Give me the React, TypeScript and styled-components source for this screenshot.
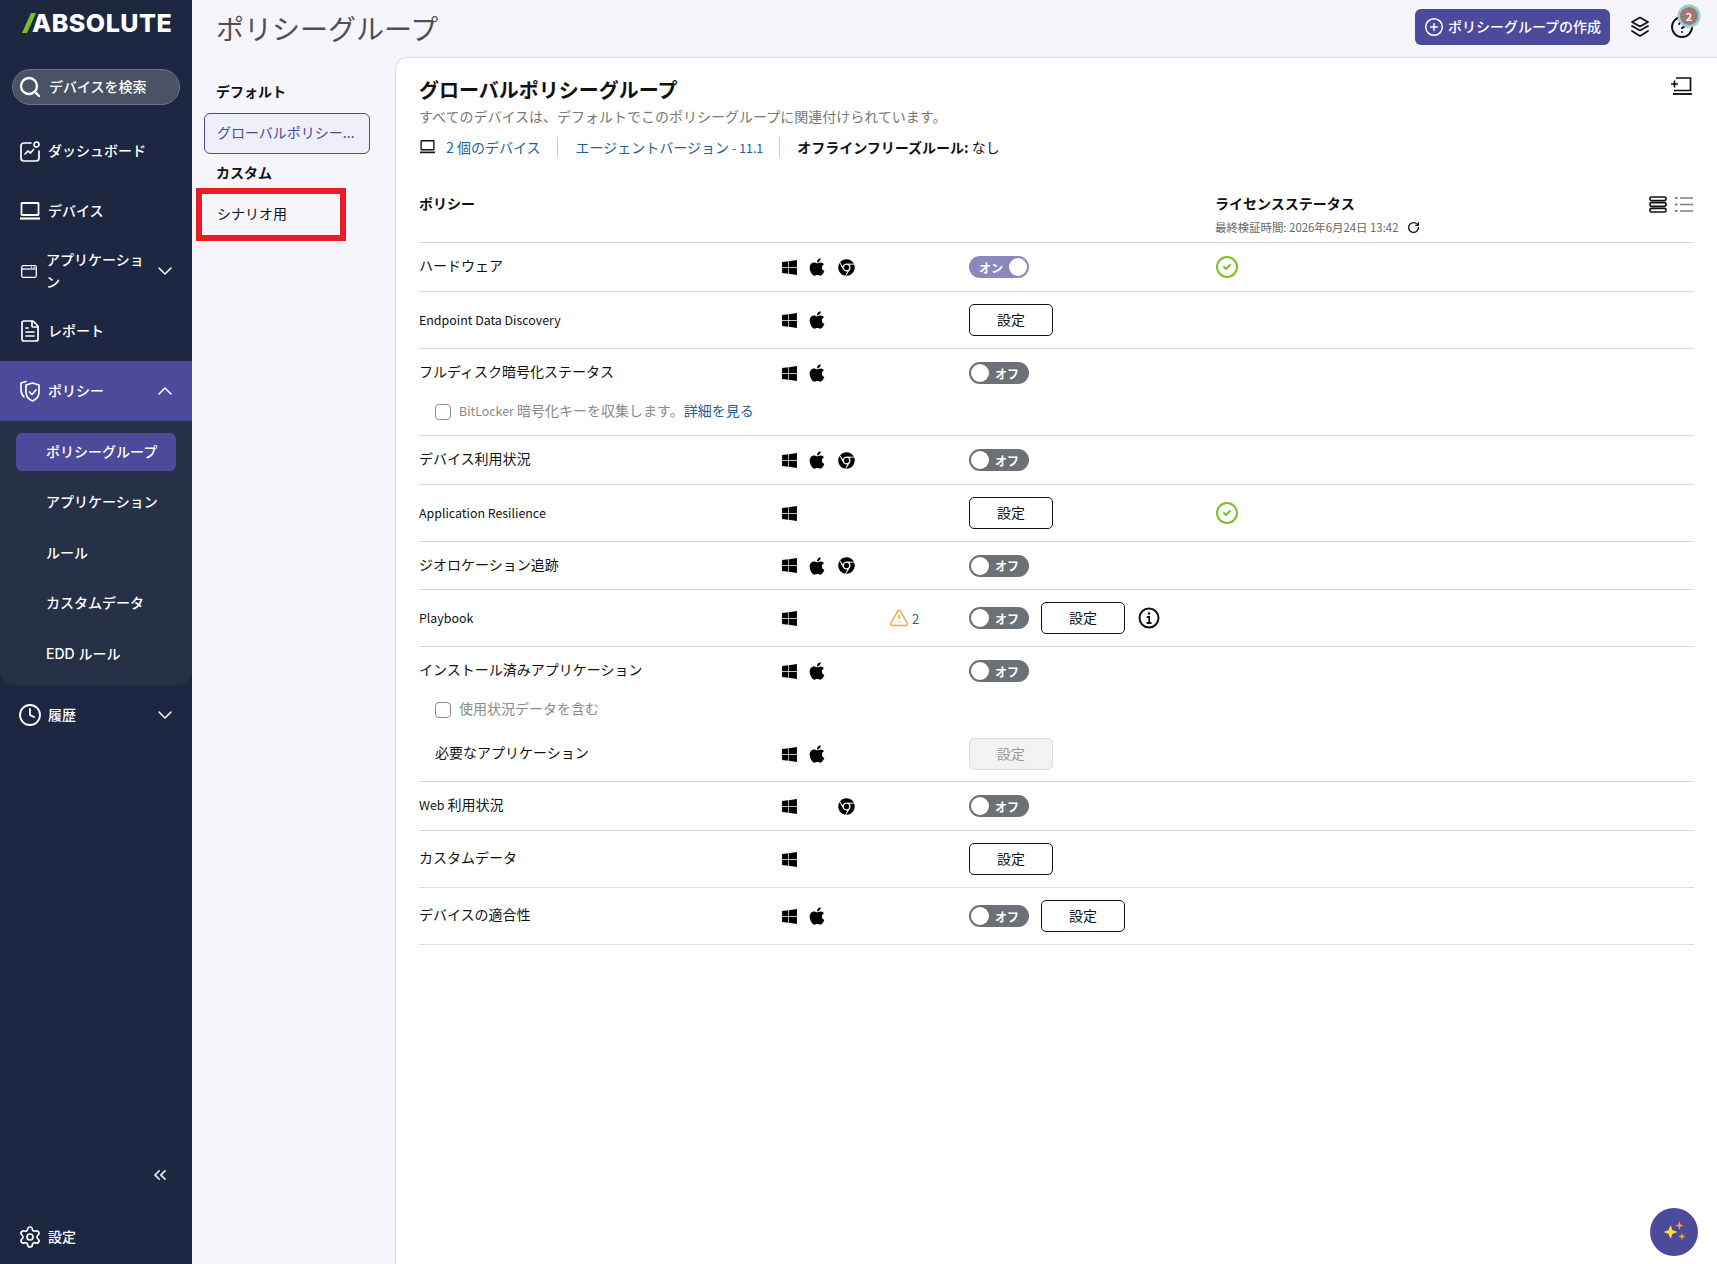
import React from 'react';
import styled, { createGlobalStyle } from 'styled-components';
import {
  ChevronDown,
  ChevronUp,
  ChevronsLeft,
  CircleCheck,
  CircleHelp,
  CirclePlus,
  Clock,
  FileText,
  RotateCw,
  Search,
  Settings,
  TriangleAlert,
} from 'lucide-react';
import { FaApple, FaChrome, FaWindows } from 'react-icons/fa';

const GlobalStyle = createGlobalStyle`
  html, body {
    margin: 0;
    padding: 0;
    height: 100%;
    background: #f5f5fb;
    font-family: "Noto Sans CJK JP", "Noto Sans", sans-serif;
    color: #111;
  }
  * { box-sizing: border-box; }
`;

const Page = styled.div`
  display: flex;
  width: 1717px;
  height: 1264px;
  overflow: hidden;
  position: relative;
`;

/* ---------- sidebar ---------- */

const Sidebar = styled.aside`
  width: 192px;
  flex: none;
  display: flex;
  flex-direction: column;
  background: #1d2742;
  color: #fff;
  font-family: Inter, "Noto Sans CJK JP", sans-serif;
`;

const Logo = styled.div`
  height: 69px;
  padding: 6px 0 0 22px;
  display: flex;
  align-items: flex-start;
  font-size: 25px;
  line-height: 34px;
  font-weight: 800;
  letter-spacing: 0.5px;

  svg {
    margin: 7px -4px 0 0;
  }
`;

const SearchBox = styled.div`
  width: 168px;
  height: 36px;
  margin-left: 12px;
  padding: 0 0 2px 5px;
  display: flex;
  align-items: center;
  gap: 7px;
  background: #4a5266;
  border: 1px solid #6b7283;
  border-radius: 18px;
  font-size: 14px;
  font-weight: 500;

  svg {
    margin-top: 2px;
  }
`;

const SearchGap = styled.div`
  height: 16px;
  flex: none;
`;

const NavItem = styled.div<{ $active?: boolean }>`
  height: 60px;
  flex: none;
  display: flex;
  align-items: center;
  gap: 8px;
  padding: 0 15px 0 20px;
  font-size: 14px;
  font-weight: 500;
  line-height: 22px;
  background: ${(p) => (p.$active ? '#4c4a9a' : 'transparent')};
`;

const NavIcon = styled.span<{ $w?: number }>`
  width: ${(p) => p.$w ?? 20}px;
  height: 24px;
  flex: none;
  display: flex;
  align-items: center;
  justify-content: center;

  svg {
    flex: none;
  }
`;

const NavLabel = styled.span`
  flex: 1;
`;

const SubPanel = styled.div`
  height: 264px;
  flex: none;
  display: flex;
  flex-direction: column;
  gap: 12.5px;
  padding: 12px 16px;
  background: #263046;
  border-radius: 0 0 14px 14px;
`;

const SubItem = styled.div<{ $active?: boolean }>`
  height: 38px;
  flex: none;
  display: flex;
  align-items: center;
  padding: 0 0 3px 30px;
  font-size: 14px;
  font-weight: 500;
  white-space: nowrap;
  border-radius: 6px;
  background: ${(p) => (p.$active ? '#4c4a9a' : 'transparent')};
`;

const CollapseRow = styled.div`
  margin-top: auto;
  height: 24px;
  padding-right: 22px;
  display: flex;
  justify-content: flex-end;
  align-items: center;
  color: #d5d8e0;
`;

const SettingsRow = styled(NavItem)`
  margin-top: 28px;
  height: 44px;
  margin-bottom: 5px;
`;

/* ---------- main ---------- */

const Main = styled.div`
  flex: 1;
  display: flex;
  flex-direction: column;
  min-width: 0;
`;

const TopBar = styled.header`
  height: 57px;
  flex: none;
  display: flex;
  align-items: flex-start;
  padding: 9px 23px 0 24px;
`;

const PageTitle = styled.h1`
  margin: -1px auto 0 0;
  font-size: 28px;
  line-height: 40px;
  font-weight: 400;
  color: #4d5157;
`;

const CreateButton = styled.button`
  height: 36px;
  width: 195px;
  display: flex;
  align-items: center;
  justify-content: center;
  gap: 4px;
  padding: 0 0 2px;
  border: none;
  border-radius: 6px;
  background: #4c4a9a;
  color: #fff;
  font: 500 14px "Noto Sans CJK JP", sans-serif;
  white-space: nowrap;

  svg {
    margin-top: 2px;
  }
`;

const TopIcons = styled.div`
  display: flex;
  align-items: center;
  height: 36px;
  margin-left: 20px;
  gap: 20px;
`;

const HelpWrap = styled.div`
  position: relative;
  width: 24px;
  height: 24px;
`;

const HelpBadge = styled.span`
  position: absolute;
  top: -8px;
  left: 10px;
  width: 18px;
  height: 18px;
  display: flex;
  align-items: center;
  justify-content: center;
  border-radius: 50%;
  background: #a47571;
  box-shadow: 0 0 0 2.5px #8fd0d0;
  color: #fff;
  font-size: 11px;
  font-weight: 700;
`;

const Body = styled.div`
  flex: 1;
  display: flex;
  min-height: 0;
`;

const GroupColumn = styled.nav`
  width: 203px;
  flex: none;
  padding: 23px 25px 0 12px;
`;

const GroupHeading = styled.div`
  padding-left: 12px;
  font-size: 14px;
  line-height: 22px;
  font-weight: 700;
  color: #111;
`;

const GroupCard = styled.div<{ $selected?: boolean }>`
  position: relative;
  height: 41px;
  margin: ${(p) => (p.$selected ? '11px 0 7px' : '9px 0 0')};
  display: flex;
  align-items: center;
  padding: ${(p) => (p.$selected ? '0 0 3px 12px' : '0 0 0 12px')};
  font-size: 14px;
  white-space: nowrap;
  border-radius: 6px;
  border: 1px solid ${(p) => (p.$selected ? '#4c4a9a' : 'transparent')};
  background: ${(p) => (p.$selected ? '#eeeff8' : 'transparent')};
  color: ${(p) => (p.$selected ? '#4c4a9a' : '#111')};
`;

const Callout = styled.span`
  position: absolute;
  left: -9px;
  top: -5px;
  width: 150px;
  height: 53px;
  border: 6px solid #ec1c24;
  pointer-events: none;
`;

const Panel = styled.main`
  flex: 1;
  min-width: 0;
  padding: 18px 23px 0 23px;
  background: #fff;
  border-top: 1px solid #dcdde2;
  border-left: 1px solid #dcdde2;
  border-top-left-radius: 12px;
`;

const TitleRow = styled.div`
  display: flex;
  justify-content: space-between;
  align-items: flex-start;

  svg {
    margin: 1px 2px 0 0;
  }
`;

const PanelTitle = styled.h2`
  margin: 0;
  font-size: 20px;
  line-height: 28px;
  font-weight: 700;
`;

const Subtitle = styled.p`
  margin: 2px 0 0;
  font-size: 14px;
  line-height: 20px;
  color: #777;
`;

const MetaRow = styled.div`
  display: flex;
  align-items: center;
  margin-top: 11px;
  height: 20px;
  font-size: 14px;
`;

const MetaItem = styled.div<{ $first?: boolean }>`
  display: flex;
  align-items: center;
  gap: 11px;
  padding: ${(p) => (p.$first ? '0 16px 0 1px' : '0 16px 0 18px')};
  border-left: ${(p) => (p.$first ? 'none' : '1px solid #ccc')};
  color: #1f5f99;
  white-space: nowrap;

  svg {
    color: #111;
  }
`;

const FreezeRule = styled(MetaItem)`
  color: #111;
  padding-left: 17px;

  b {
    font-weight: 700;
  }
`;

const Latin = styled.span`
  font-size: 12.4px;
`;

const TableHead = styled.div`
  display: flex;
  align-items: flex-start;
  height: 50px;
  margin-top: 35px;
  padding-top: 1px;
`;

const HeadPolicy = styled.div`
  width: 796px;
  font-size: 14px;
  line-height: 20px;
  font-weight: 700;
`;

const HeadLicense = styled.div`
  font-size: 14px;
  line-height: 20px;
  font-weight: 700;
`;

const VerifiedAt = styled.div`
  display: flex;
  align-items: center;
  gap: 8px;
  margin-top: 4px;
  font-size: 11.4px;
  line-height: 20px;
  font-weight: 400;
  color: #666;
`;

const ViewSwitch = styled.div`
  margin-left: auto;
  display: flex;
  gap: 8px;
  padding: 3px 1px 0 0;
`;

const Section = styled.section`
  border-top: 1px solid #dcdcdc;
`;

const Row = styled.div<{ $h: number }>`
  display: grid;
  grid-template-columns: 363px 109px 78px 246px 1fr;
  align-items: center;
  min-height: ${(p) => p.$h}px;
`;

const PolicyName = styled.div<{ $indent?: boolean; $latin?: boolean }>`
  font-size: ${(p) => (p.$latin ? '12.4px' : '14px')};
  line-height: 20px;
  margin-bottom: ${(p) => (p.$latin ? '1px' : '4px')};
  padding-left: ${(p) => (p.$indent ? '16px' : '0')};
`;

const OsIcons = styled.div`
  display: flex;
  align-items: center;
  margin-left: -1px;
`;

const OsCell = styled.span<{ $shift?: number }>`
  width: ${(p) => (p.$shift === undefined ? 29 : 28)}px;
  height: 20px;
  display: flex;
  align-items: center;

  svg {
    margin-left: ${(p) => p.$shift ?? 0}px;
  }
`;

const Warn = styled.div`
  display: flex;
  align-items: center;
  gap: 3px;
  margin-left: -2px;
  font-size: 13px;
  color: #1f5f99;
`;

const Controls = styled.div`
  display: flex;
  align-items: center;
  gap: 12px;
`;

const ToggleTrack = styled.div<{ $on?: boolean }>`
  position: relative;
  width: 60px;
  height: 22px;
  flex: none;
  display: flex;
  align-items: center;
  justify-content: ${(p) => (p.$on ? 'flex-start' : 'flex-end')};
  padding: 0 10px;
  border-radius: 11px;
  background: ${(p) => (p.$on ? '#8b88bd' : '#6c7178')};
  color: #fff;
  font-size: 12px;
  font-weight: 700;
`;

const ToggleKnob = styled.span<{ $on?: boolean }>`
  position: absolute;
  top: 2px;
  left: ${(p) => (p.$on ? '40px' : '2px')};
  width: 18px;
  height: 18px;
  border-radius: 50%;
  background: #fff;
`;

const SetupButton = styled.button`
  width: 84px;
  height: 32px;
  flex: none;
  padding: 0 0 3px;
  border: 1px solid #111;
  border-radius: 5px;
  background: #fff;
  color: #111;
  font: 400 14px "Noto Sans CJK JP", sans-serif;

  &:disabled {
    border-color: #dcdcdc;
    background: #f2f2f2;
    color: #999;
  }
`;

const CheckRow = styled.label`
  height: 32px;
  display: flex;
  align-items: center;
  gap: 8px;
  padding: 0 0 6px 16px;
  font-size: 14px;
  color: #8a8a8a;
`;

const CheckBox = styled.span`
  width: 16px;
  height: 16px;
  margin-top: 4px;
  border: 1px solid #8d8d8d;
  border-radius: 4px;
  background: #fff;
`;

const DetailLink = styled.a`
  color: #1f5f99;
  text-decoration: none;
`;

const BitLockerSpace = styled.div`
  height: 6px;
`;

const TableEnd = styled.div`
  border-top: 1px solid #dcdcdc;
`;

const AiButton = styled.button`
  position: absolute;
  left: 1650px;
  top: 1208px;
  width: 48px;
  height: 48px;
  padding: 0;
  display: flex;
  align-items: center;
  justify-content: center;
  border: none;
  border-radius: 50%;
  background: #4c4a9a;
`;

/* ---------- drawn icons ---------- */

const LogoSlash = () => (
  <svg width="14" height="20" viewBox="0 0 14 20">
    <path d="M9 0H14L5 20H0z" fill="#7ac022" />
  </svg>
);

const DashboardIcon = () => (
  <svg width="21" height="21" viewBox="0 0 21 21" fill="none" stroke="#fff" strokeWidth="1.7" strokeLinecap="round" strokeLinejoin="round">
    <path d="M11 2H4a3 3 0 0 0-3 3v12a3 3 0 0 0 3 3h12a3 3 0 0 0 3-3v-7" />
    <circle cx="16.500" cy="3.500" r="2.500" />
    <path d="M5 13l3-3 2.500 2 3-3.500" />
  </svg>
);

const AppWindowIcon = () => (
  <svg width="16" height="13" viewBox="0 0 16 13" fill="none" stroke="#fff" strokeWidth="1.3">
    <rect x="0.700" y="0.700" width="14.600" height="11.600" rx="1.500" />
    <path d="M0.700 4h14.600" />
    <path d="M10 2.300h1M12.500 2.300h1" />
  </svg>
);

const ShieldIcon = () => (
  <svg width="21" height="22" viewBox="0 0 21 22" fill="none" stroke="#fff" strokeWidth="1.7" strokeLinecap="round" strokeLinejoin="round">
    <path d="M6 1.500L1 3v7c0 3 1 5 3 7" />
    <path d="M12.500 3L6 5v7c0 4.500 3 7.500 6.500 9 3.500-1.500 6.500-4.500 6.500-9V5z" />
    <path d="M9.500 12l2.500 2.500 4-4.500" />
  </svg>
);

const LaptopIcon = ({ size, color }: { size: number; color: string }) => (
  <svg width={size} height={size * 0.9} viewBox="0 0 20 18" fill="none" stroke={color} strokeWidth="1.800">
    <rect x="1.500" y="1" width="17" height="12" rx="0.500" />
    <path d="M0 16.500h20" strokeWidth="2.200" />
  </svg>
);

const LayersIcon = () => (
  <svg width="20" height="22" viewBox="0 0 20 22" fill="none" stroke="#111" strokeWidth="1.800" strokeLinejoin="round" strokeLinecap="round">
    <path d="M10 1.500L18 6l-8 4.500L2 6z" />
    <path d="M2 10l8 4.500 8-4.500" />
    <path d="M2 15l8 5 8-5" />
  </svg>
);

const LaptopPlusIcon = () => (
  <svg width="21" height="18" viewBox="0 0 21 18" fill="none" stroke="#111" strokeWidth="1.700">
    <path d="M5 1h14.500v12.500H3" />
    <path d="M2 17h19" strokeWidth="1.900" />
    <path d="M0 7h7M3.500 3.500v7" />
  </svg>
);

const CardViewIcon = () => (
  <svg width="18" height="17" viewBox="0 0 18 17" fill="none" stroke="#111" strokeWidth="1.700">
    <rect x="1" y="1" width="16" height="3.600" rx="1.500" />
    <rect x="1" y="6.700" width="16" height="3.600" rx="1.500" />
    <rect x="1" y="12.400" width="16" height="3.600" rx="1.500" />
  </svg>
);

const ListViewIcon = () => (
  <svg width="18" height="17" viewBox="0 0 18 17" fill="none" stroke="#7d7f85" strokeWidth="1.500">
    <path d="M5 2h13M5 8.500h13M5 15h13" />
    <path d="M0 2h2.500M0 8.500h2.500M0 15h2.500" strokeWidth="2" />
  </svg>
);

const InfoIcon = () => (
  <svg width="24" height="24" viewBox="0 0 24 24" fill="none" stroke="#111" strokeWidth="2">
    <circle cx="12" cy="12" r="9.500" />
    <path d="M9.800 11h2.400v6M9.500 17h5" strokeWidth="1.800" />
    <circle cx="12" cy="7.500" r="1.300" fill="#111" stroke="none" />
  </svg>
);

const SparkleIcon = () => (
  <svg width="28" height="28" viewBox="0 0 28 28">
    <path d="M10.500 7l1.900 5.100L17.500 14l-5.100 1.900-1.900 5.100-1.900-5.100L3.500 14l5.100-1.900z" fill="#ffd83a" />
    <path d="M19.500 3l1.100 3.400L24 7.500l-3.400 1.100L19.500 12l-1.100-3.400L15 7.500l3.400-1.100z" fill="#f5a623" />
    <path d="M22 15l.9 2.600 2.600.9-2.600.9L22 22l-.9-2.600-2.600-.9 2.600-.9z" fill="#f5a623" />
  </svg>
);

/* ---------- small pieces ---------- */

type Os = 'win' | 'mac' | 'chrome';

const OsRow = ({ list }: { list: Os[] }) => (
  <OsIcons>
    <OsCell>{list.includes('win') && <FaWindows size={17} color="#000" />}</OsCell>
    <OsCell $shift={-3}>{list.includes('mac') && <FaApple size={20} color="#000" />}</OsCell>
    <OsCell $shift={0}>{list.includes('chrome') && <FaChrome size={17} color="#000" />}</OsCell>
  </OsIcons>
);

const Toggle = ({ on }: { on?: boolean }) => (
  <ToggleTrack $on={on}>
    {on ? 'オン' : 'オフ'}
    <ToggleKnob $on={on} />
  </ToggleTrack>
);

const LicenseOk = () => <CircleCheck size={24} color="#7ac022" strokeWidth={2} />;

const subItems = ['ポリシーグループ', 'アプリケーション', 'ルール', 'カスタムデータ', 'EDD ルール'];

export default function App() {
  return (
    <>
      <GlobalStyle />
      <Page>
        <Sidebar>
          <Logo>
            <LogoSlash />
            ABSOLUTE
          </Logo>
          <SearchBox>
            <Search size={24} strokeWidth={2.300} />
            デバイスを検索
          </SearchBox>
          <SearchGap />
          <NavItem>
            <NavIcon>
              <DashboardIcon />
            </NavIcon>
            <NavLabel>ダッシュボード</NavLabel>
          </NavItem>
          <NavItem>
            <NavIcon>
              <LaptopIcon size={20} color="#fff" />
            </NavIcon>
            <NavLabel>デバイス</NavLabel>
          </NavItem>
          <NavItem>
            <NavIcon $w={18}>
              <AppWindowIcon />
            </NavIcon>
            <NavLabel>アプリケーション</NavLabel>
            <ChevronDown size={24} strokeWidth={1.500} />
          </NavItem>
          <NavItem>
            <NavIcon>
              <FileText size={24} strokeWidth={1.700} />
            </NavIcon>
            <NavLabel>レポート</NavLabel>
          </NavItem>
          <NavItem $active>
            <NavIcon>
              <ShieldIcon />
            </NavIcon>
            <NavLabel>ポリシー</NavLabel>
            <ChevronUp size={24} strokeWidth={1.500} />
          </NavItem>
          <SubPanel>
            {subItems.map((label, i) => (
              <SubItem key={label} $active={i === 0}>
                {label}
              </SubItem>
            ))}
          </SubPanel>
          <NavItem>
            <NavIcon>
              <Clock size={24} strokeWidth={1.800} />
            </NavIcon>
            <NavLabel>履歴</NavLabel>
            <ChevronDown size={24} strokeWidth={1.500} />
          </NavItem>
          <CollapseRow>
            <ChevronsLeft size={20} strokeWidth={2.200} />
          </CollapseRow>
          <SettingsRow>
            <NavIcon>
              <Settings size={24} strokeWidth={1.700} />
            </NavIcon>
            <NavLabel>設定</NavLabel>
          </SettingsRow>
        </Sidebar>

        <Main>
          <TopBar>
            <PageTitle>ポリシーグループ</PageTitle>
            <CreateButton>
              <CirclePlus size={20} strokeWidth={1.800} />
              ポリシーグループの作成
            </CreateButton>
            <TopIcons>
              <LayersIcon />
              <HelpWrap>
                <CircleHelp size={24} strokeWidth={1.900} />
                <HelpBadge>2</HelpBadge>
              </HelpWrap>
            </TopIcons>
          </TopBar>

          <Body>
            <GroupColumn>
              <GroupHeading>デフォルト</GroupHeading>
              <GroupCard $selected>グローバルポリシー...</GroupCard>
              <GroupHeading>カスタム</GroupHeading>
              <GroupCard>
                シナリオ用
                <Callout />
              </GroupCard>
            </GroupColumn>

            <Panel>
              <TitleRow>
                <PanelTitle>グローバルポリシーグループ</PanelTitle>
                <LaptopPlusIcon />
              </TitleRow>
              <Subtitle>すべてのデバイスは、デフォルトでこのポリシーグループに関連付けられています。</Subtitle>
              <MetaRow>
                <MetaItem $first>
                  <LaptopIcon size={15} color="#111" />
                  2 個のデバイス
                </MetaItem>
                <MetaItem>
                  <span>
                    エージェントバージョン <Latin>- 11.1</Latin>
                  </span>
                </MetaItem>
                <FreezeRule>
                  <span>
                    <b>オフラインフリーズルール:</b> なし
                  </span>
                </FreezeRule>
              </MetaRow>

              <TableHead>
                <HeadPolicy>ポリシー</HeadPolicy>
                <HeadLicense>
                  ライセンスステータス
                  <VerifiedAt>
                    最終検証時間: 2026年6月24日 13:42
                    <RotateCw size={13} strokeWidth={2.400} color="#111" />
                  </VerifiedAt>
                </HeadLicense>
                <ViewSwitch>
                  <CardViewIcon />
                  <ListViewIcon />
                </ViewSwitch>
              </TableHead>

              <Section>
                <Row $h={48}>
                  <PolicyName>ハードウェア</PolicyName>
                  <OsRow list={['win', 'mac', 'chrome']} />
                  <span />
                  <Controls>
                    <Toggle on />
                  </Controls>
                  <LicenseOk />
                </Row>
              </Section>
              <Section>
                <Row $h={56}>
                  <PolicyName $latin>Endpoint Data Discovery</PolicyName>
                  <OsRow list={['win', 'mac']} />
                  <span />
                  <Controls>
                    <SetupButton>設定</SetupButton>
                  </Controls>
                </Row>
              </Section>
              <Section>
                <Row $h={48}>
                  <PolicyName>フルディスク暗号化ステータス</PolicyName>
                  <OsRow list={['win', 'mac']} />
                  <span />
                  <Controls>
                    <Toggle />
                  </Controls>
                </Row>
                <CheckRow>
                  <CheckBox />
                  <span>
                    <Latin>BitLocker</Latin> 暗号化キーを収集します。<DetailLink>詳細を見る</DetailLink>
                  </span>
                </CheckRow>
                <BitLockerSpace />
              </Section>
              <Section>
                <Row $h={48}>
                  <PolicyName>デバイス利用状況</PolicyName>
                  <OsRow list={['win', 'mac', 'chrome']} />
                  <span />
                  <Controls>
                    <Toggle />
                  </Controls>
                </Row>
              </Section>
              <Section>
                <Row $h={56}>
                  <PolicyName $latin>Application Resilience</PolicyName>
                  <OsRow list={['win']} />
                  <span />
                  <Controls>
                    <SetupButton>設定</SetupButton>
                  </Controls>
                  <LicenseOk />
                </Row>
              </Section>
              <Section>
                <Row $h={47}>
                  <PolicyName>ジオロケーション追跡</PolicyName>
                  <OsRow list={['win', 'mac', 'chrome']} />
                  <span />
                  <Controls>
                    <Toggle />
                  </Controls>
                </Row>
              </Section>
              <Section>
                <Row $h={56}>
                  <PolicyName $latin>Playbook</PolicyName>
                  <OsRow list={['win']} />
                  <Warn>
                    <TriangleAlert size={20} color="#f5a73b" strokeWidth={1.700} />2
                  </Warn>
                  <Controls>
                    <Toggle />
                    <SetupButton>設定</SetupButton>
                    <InfoIcon />
                  </Controls>
                </Row>
              </Section>
              <Section>
                <Row $h={48}>
                  <PolicyName>インストール済みアプリケーション</PolicyName>
                  <OsRow list={['win', 'mac']} />
                  <span />
                  <Controls>
                    <Toggle />
                  </Controls>
                </Row>
                <CheckRow>
                  <CheckBox />
                  使用状況データを含む
                </CheckRow>
                <Row $h={54}>
                  <PolicyName $indent>必要なアプリケーション</PolicyName>
                  <OsRow list={['win', 'mac']} />
                  <span />
                  <Controls>
                    <SetupButton disabled>設定</SetupButton>
                  </Controls>
                </Row>
              </Section>
              <Section>
                <Row $h={48}>
                  <PolicyName>
                    <Latin>Web</Latin> 利用状況
                  </PolicyName>
                  <OsRow list={['win', 'chrome']} />
                  <span />
                  <Controls>
                    <Toggle />
                  </Controls>
                </Row>
              </Section>
              <Section>
                <Row $h={56}>
                  <PolicyName>カスタムデータ</PolicyName>
                  <OsRow list={['win']} />
                  <span />
                  <Controls>
                    <SetupButton>設定</SetupButton>
                  </Controls>
                </Row>
              </Section>
              <Section>
                <Row $h={56}>
                  <PolicyName>デバイスの適合性</PolicyName>
                  <OsRow list={['win', 'mac']} />
                  <span />
                  <Controls>
                    <Toggle />
                    <SetupButton>設定</SetupButton>
                  </Controls>
                </Row>
              </Section>
              <TableEnd />
            </Panel>
          </Body>
        </Main>

        <AiButton aria-label="AI">
          <SparkleIcon />
        </AiButton>
      </Page>
    </>
  );
}
